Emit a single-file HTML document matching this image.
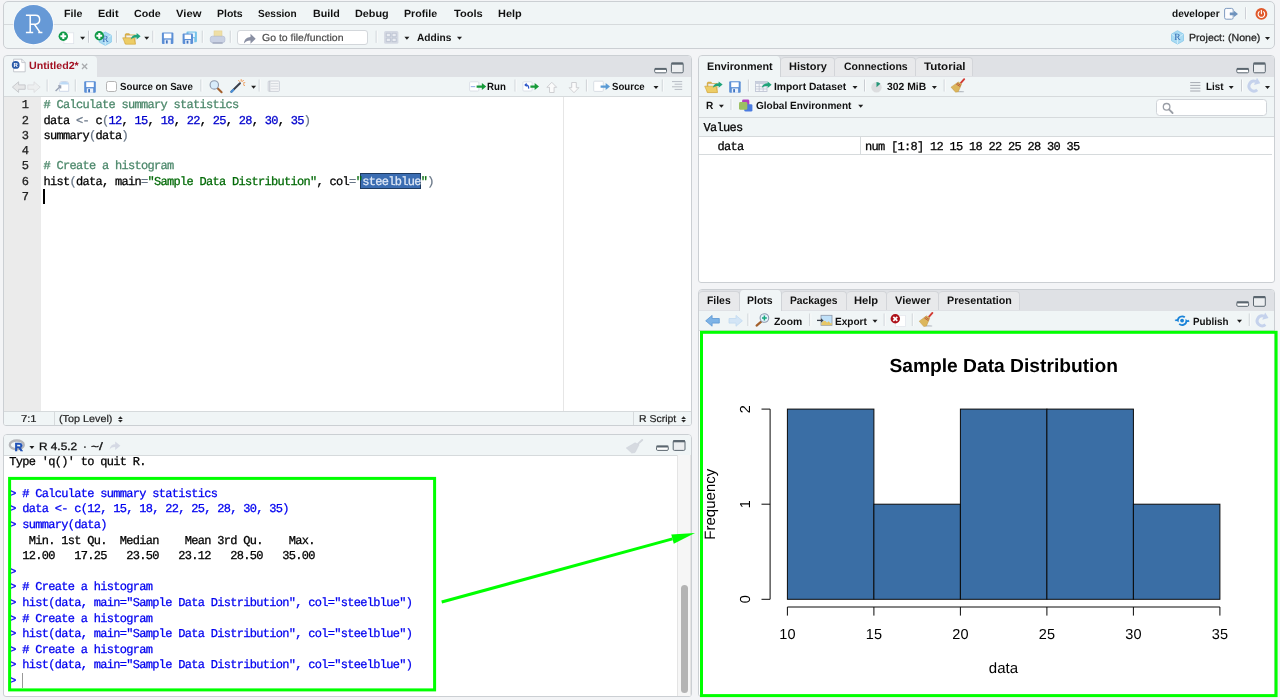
<!DOCTYPE html>
<html lang="en"><head><meta charset="utf-8"><title>RStudio</title>
<style>
html,body{margin:0;padding:0}
body{width:1280px;height:700px;overflow:hidden;background:#f3f4f6;font-family:"Liberation Sans",sans-serif;position:relative;text-rendering:geometricPrecision}
.a{position:absolute;box-sizing:border-box}
.t{position:absolute;white-space:pre;line-height:1;transform-origin:0 50%;font-size:10.2px;color:#000}
.h{font-weight:bold}
#w{position:absolute;left:0;top:0;width:1280px;height:700px;will-change:transform}
.pane{border:1px solid #cbcfd3;border-radius:4px 4px 3px 3px;background:#fff;overflow:hidden}
.tb{background:#f1f5f6}
.tabbar{background:#dfe1e5}
.m{font-family:"Liberation Mono",monospace;position:absolute;white-space:pre;line-height:1;-webkit-text-stroke:.28px}
svg{position:absolute;left:0;top:0;overflow:visible}
</style></head>
<body>
<div id="w">
<div class="a " style="left:3px;top:1px;width:1271.6px;height:48px;background:#f0f5f6;border:1px solid #cbcfd3;border-radius:5px;"></div>
<div class="a " style="left:4px;top:24px;width:1269.6px;height:1px;background:#d6dadc;"></div>
<span class="t h" style="left:63.9px;top:10px;font-size:10.4px;color:#111;transform:scaleX(1.027);">File</span>
<span class="t h" style="left:98.1px;top:10px;font-size:10.4px;color:#111;transform:scaleX(1.044);">Edit</span>
<span class="t h" style="left:133.9px;top:10px;font-size:10.4px;color:#111;transform:scaleX(1.027);">Code</span>
<span class="t h" style="left:175.9px;top:10px;font-size:10.4px;color:#111;transform:scaleX(1.080);">View</span>
<span class="t h" style="left:216.9px;top:10px;font-size:10.4px;color:#111;transform:scaleX(1.011);">Plots</span>
<span class="t h" style="left:258.1px;top:10px;font-size:10.4px;color:#111;transform:scaleX(0.970);">Session</span>
<span class="t h" style="left:312.6px;top:10px;font-size:10.4px;color:#111;transform:scaleX(1.027);">Build</span>
<span class="t h" style="left:354.9px;top:10px;font-size:10.4px;color:#111;transform:scaleX(1.042);">Debug</span>
<span class="t h" style="left:404.4px;top:10px;font-size:10.4px;color:#111;transform:scaleX(1.026);">Profile</span>
<span class="t h" style="left:453.6px;top:10px;font-size:10.4px;color:#111;transform:scaleX(1.065);">Tools</span>
<span class="t h" style="left:498.4px;top:10px;font-size:10.4px;color:#111;transform:scaleX(1.052);">Help</span>
<span class="t h" style="left:1172.1px;top:10px;font-size:10.4px;color:#111;transform:scaleX(0.969);">developer</span>
<span class="t h" style="left:416.7px;top:34px;font-size:10.4px;color:#111;transform:scaleX(0.976);">Addins</span>
<span class="t" style="left:1188.9px;top:34px;color:#222;transform:scaleX(1.042);-webkit-text-stroke:.25px #222;">Project: (None)</span>
<div class="a " style="left:237.4px;top:30.4px;width:131px;height:15.1px;background:#fff;border:1px solid #d3d7db;border-radius:3px;"></div>
<span class="t" style="left:262.3px;top:34px;color:#4a4a4a;transform:scaleX(1.028);-webkit-text-stroke:.2px #4a4a4a;">Go to file/function</span>
<div class="a pane" style="left:3px;top:55px;width:689px;height:371px;">
<div class="a" style="left:0px;top:0px;width:687px;height:20.5px;background:#dfe1e5;"></div>
<div class="a" style="left:0px;top:0px;width:93px;height:21px;background:#f0f5f6;border-radius:4px 4px 0 0;"></div>
<div class="a" style="left:0px;top:20.5px;width:687px;height:20px;background:#f0f5f6;border-bottom:1px solid #d6dadc;"></div>
<div class="a" style="left:0px;top:40.5px;width:36.7px;height:315px;background:#ebebeb;"></div>
<div class="a" style="left:559px;top:40.5px;width:1px;height:315px;background:#e6e6e6;"></div>
<div class="a" style="left:0px;top:355px;width:687px;height:15px;background:#f0f5f6;border-top:1px solid #d6dadc;"></div>
<div class="a" style="left:50px;top:356px;width:1px;height:14px;background:#d6dadc;"></div>
<div class="a" style="left:629.3px;top:356px;width:1px;height:14px;background:#d6dadc;"></div>
</div>
<span class="t h" style="left:28.6px;top:62px;font-size:10.4px;color:#a31224;transform:scaleX(1.026);">Untitled2*</span>
<div class="a " style="left:105.9px;top:80.5px;width:11px;height:11px;background:#fff;border:1px solid #b4b4b4;border-radius:2.5px;"></div>
<span class="t h" style="left:119.9px;top:83px;font-size:10.4px;color:#111;transform:scaleX(0.934);">Source on Save</span>
<span class="t h" style="left:487.2px;top:83px;font-size:10.4px;color:#111;transform:scaleX(0.930);">Run</span>
<span class="t h" style="left:612.2px;top:83px;font-size:10.4px;color:#111;transform:scaleX(0.928);">Source</span>
<span class="t" style="left:20.6px;top:415px;font-size:10px;color:#222;transform:scaleX(1.122);-webkit-text-stroke:.2px #222;">7:1</span>
<span class="t" style="left:59.1px;top:415px;font-size:10px;color:#222;transform:scaleX(1.080);-webkit-text-stroke:.2px #222;">(Top Level)</span>
<span class="t" style="left:638.8px;top:415px;font-size:10px;color:#222;transform:scaleX(1.046);-webkit-text-stroke:.2px #222;">R Script</span>
<div class="a " style="left:360.3px;top:173.1px;width:60.7px;height:15.6px;background:#3b6db2;border:1px solid #1e3a5f;"></div>
<span class="m " style="left:21.8px;top:99px;font-size:12px;letter-spacing:-0.7px;"><span style="color:#222">1</span></span>
<span class="m " style="left:43.5px;top:99px;font-size:12px;letter-spacing:-0.7px;"><span style="color:#4c886b"># Calculate summary statistics</span></span>
<span class="m " style="left:21.8px;top:115px;font-size:12px;letter-spacing:-0.7px;"><span style="color:#222">2</span></span>
<span class="m " style="left:43.5px;top:115px;font-size:12px;letter-spacing:-0.7px;"><span style="color:#000">data </span><span style="color:#687687">&lt;-</span><span style="color:#000"> c</span><span style="color:#687687">(</span><span style="color:#0000cd">12</span><span style="color:#000">, </span><span style="color:#0000cd">15</span><span style="color:#000">, </span><span style="color:#0000cd">18</span><span style="color:#000">, </span><span style="color:#0000cd">22</span><span style="color:#000">, </span><span style="color:#0000cd">25</span><span style="color:#000">, </span><span style="color:#0000cd">28</span><span style="color:#000">, </span><span style="color:#0000cd">30</span><span style="color:#000">, </span><span style="color:#0000cd">35</span><span style="color:#687687">)</span></span>
<span class="m " style="left:21.8px;top:130px;font-size:12px;letter-spacing:-0.7px;"><span style="color:#222">3</span></span>
<span class="m " style="left:43.5px;top:130px;font-size:12px;letter-spacing:-0.7px;"><span style="color:#000">summary</span><span style="color:#687687">(</span><span style="color:#000">data</span><span style="color:#687687">)</span></span>
<span class="m " style="left:21.8px;top:145px;font-size:12px;letter-spacing:-0.7px;"><span style="color:#222">4</span></span>
<span class="m " style="left:21.8px;top:160px;font-size:12px;letter-spacing:-0.7px;"><span style="color:#222">5</span></span>
<span class="m " style="left:43.5px;top:160px;font-size:12px;letter-spacing:-0.7px;"><span style="color:#4c886b"># Create a histogram</span></span>
<span class="m " style="left:21.8px;top:176px;font-size:12px;letter-spacing:-0.7px;"><span style="color:#222">6</span></span>
<span class="m " style="left:43.5px;top:176px;font-size:12px;letter-spacing:-0.7px;"><span style="color:#000">hist</span><span style="color:#687687">(</span><span style="color:#000">data, main</span><span style="color:#687687">=</span><span style="color:#036a07">"Sample Data Distribution"</span><span style="color:#000">, col</span><span style="color:#687687">=</span><span style="color:#036a07">"</span><span style="color:#dfe8f6">steelblue</span><span style="color:#036a07">"</span><span style="color:#687687">)</span></span>
<span class="m " style="left:21.8px;top:191px;font-size:12px;letter-spacing:-0.7px;"><span style="color:#222">7</span></span>
<div class="a " style="left:43.3px;top:189.2px;width:1.6px;height:14.8px;background:#000;"></div>
<div class="a pane" style="left:3px;top:433.5px;width:689px;height:263px;">
<div class="a" style="left:0px;top:0px;width:687px;height:21px;background:#f0f5f6;border-bottom:1px solid #d6dadc;"></div>
<div class="a" style="left:673.4px;top:20.5px;width:13.6px;height:241px;background:#f6f6f6;border-left:1px solid #e4e4e4;border-right:1px solid #e4e4e4;"></div>
<div class="a" style="left:677px;top:150.5px;width:7px;height:107.5px;background:#b4b4b4;border-radius:3.5px;"></div>
</div>
<span class="t" style="left:39.4px;top:442px;font-size:10.7px;color:#111;transform:scaleX(1.104);-webkit-text-stroke:.3px #111;">R 4.5.2</span>
<span class="t" style="left:83px;top:442px;font-size:10.7px;color:#111;transform:scaleX(1.060);-webkit-text-stroke:.3px #111;">·</span>
<span class="t" style="left:91.3px;top:442px;font-size:10.7px;color:#111;transform:scaleX(1.280);-webkit-text-stroke:.3px #111;">~/</span>
<span class="m " style="left:9.3px;top:456px;font-size:12px;letter-spacing:-0.7px;"><span style="color:#000">Type 'q()' to quit R.</span></span>
<span class="m " style="left:9.3px;top:488px;font-size:12px;letter-spacing:-0.7px;"><span style="color:#0000f0">&gt; # Calculate summary statistics</span></span>
<span class="m " style="left:9.3px;top:503px;font-size:12px;letter-spacing:-0.7px;"><span style="color:#0000f0">&gt; data &lt;- c(12, 15, 18, 22, 25, 28, 30, 35)</span></span>
<span class="m " style="left:9.3px;top:519px;font-size:12px;letter-spacing:-0.7px;"><span style="color:#0000f0">&gt; summary(data)</span></span>
<span class="m " style="left:9.3px;top:535px;font-size:12px;letter-spacing:-0.7px;"><span style="color:#000">   Min. 1st Qu.  Median    Mean 3rd Qu.    Max. </span></span>
<span class="m " style="left:9.3px;top:550px;font-size:12px;letter-spacing:-0.7px;"><span style="color:#000">  12.00   17.25   23.50   23.12   28.50   35.00 </span></span>
<span class="m " style="left:9.3px;top:566px;font-size:12px;letter-spacing:-0.7px;"><span style="color:#0000f0">&gt; </span></span>
<span class="m " style="left:9.3px;top:581px;font-size:12px;letter-spacing:-0.7px;"><span style="color:#0000f0">&gt; # Create a histogram</span></span>
<span class="m " style="left:9.3px;top:597px;font-size:12px;letter-spacing:-0.7px;"><span style="color:#0000f0">&gt; hist(data, main="Sample Data Distribution", col="steelblue")</span></span>
<span class="m " style="left:9.3px;top:613px;font-size:12px;letter-spacing:-0.7px;"><span style="color:#0000f0">&gt; # Create a histogram</span></span>
<span class="m " style="left:9.3px;top:628px;font-size:12px;letter-spacing:-0.7px;"><span style="color:#0000f0">&gt; hist(data, main="Sample Data Distribution", col="steelblue")</span></span>
<span class="m " style="left:9.3px;top:644px;font-size:12px;letter-spacing:-0.7px;"><span style="color:#0000f0">&gt; # Create a histogram</span></span>
<span class="m " style="left:9.3px;top:659px;font-size:12px;letter-spacing:-0.7px;"><span style="color:#0000f0">&gt; hist(data, main="Sample Data Distribution", col="steelblue")</span></span>
<span class="m " style="left:9.3px;top:675px;font-size:12px;letter-spacing:-0.7px;"><span style="color:#0000f0">&gt; </span></span>
<div class="a " style="left:21.6px;top:673px;width:1px;height:15px;background:#999;"></div>
<div class="a pane" style="left:698px;top:55px;width:576.6px;height:228px;">
<div class="a" style="left:0px;top:0px;width:574.6px;height:20.5px;background:#dfe1e5;"></div>
<div class="a" style="left:0px;top:20.5px;width:574.6px;height:20px;background:#f0f5f6;border-bottom:1px solid #d6dadc;"></div>
<div class="a" style="left:0px;top:40.5px;width:574.6px;height:21px;background:#f0f5f6;border-bottom:1px solid #d6dadc;"></div>
<div class="a" style="left:0px;top:61.5px;width:574.6px;height:19.5px;background:#f0f5f6;border-bottom:1px solid #d6dadc;"></div>
<div class="a" style="left:0px;top:98px;width:572.6px;height:1px;background:#d6dadc;"></div>
<div class="a" style="left:161.3px;top:81px;width:1px;height:17.5px;background:#d6dadc;"></div>
</div>
<div class="a " style="left:780.6px;top:56.9px;width:54.8px;height:19.4px;background:#e8e9eb;border-radius:4px 4px 0 0;border:1px solid #d3d5d9;border-bottom:none;border-left:none;"></div>
<span class="t h" style="left:789px;top:62px;font-size:10.9px;color:#111;transform:scaleX(1.007);">History</span>
<div class="a " style="left:835.4px;top:56.9px;width:80.4px;height:19.4px;background:#e8e9eb;border-radius:4px 4px 0 0;border:1px solid #d3d5d9;border-bottom:none;border-left:none;"></div>
<span class="t h" style="left:843.8px;top:62px;font-size:10.9px;color:#111;transform:scaleX(0.965);">Connections</span>
<div class="a " style="left:915.8px;top:56.9px;width:57.5px;height:19.4px;background:#e8e9eb;border-radius:4px 4px 0 0;border:1px solid #d3d5d9;border-bottom:none;border-left:none;"></div>
<span class="t h" style="left:923.8px;top:62px;font-size:10.9px;color:#111;transform:scaleX(1.062);">Tutorial</span>
<div class="a " style="left:699px;top:56.3px;width:82.2px;height:21.2px;background:#f0f5f6;border-radius:4px 4px 0 0;border-right:1px solid #d0d3d7;"></div>
<span class="t h" style="left:707px;top:62px;font-size:10.9px;color:#111;transform:scaleX(0.986);">Environment</span>
<span class="t h" style="left:774px;top:83px;font-size:10.4px;color:#111;transform:scaleX(0.992);">Import Dataset</span>
<span class="t h" style="left:886.6px;top:83px;font-size:10.4px;color:#111;transform:scaleX(0.997);">302 MiB</span>
<span class="t h" style="left:1205.6px;top:83px;font-size:10.4px;color:#111;transform:scaleX(0.947);">List</span>
<span class="t h" style="left:705.9px;top:102px;font-size:10.4px;color:#111;transform:scaleX(0.972);">R</span>
<span class="t h" style="left:756.3px;top:102px;font-size:10.4px;color:#111;transform:scaleX(0.966);">Global Environment</span>
<div class="a " style="left:1156.2px;top:99.3px;width:110.6px;height:16.5px;background:#fff;border:1px solid #d0d4d9;border-radius:3.5px;"></div>
<span class="m " style="left:703.6px;top:122px;font-size:12px;letter-spacing:-0.7px;"><span style="color:#000">Values</span></span>
<span class="m " style="left:717.6px;top:141px;font-size:12px;letter-spacing:-0.7px;"><span style="color:#000">data</span></span>
<span class="m " style="left:865px;top:141px;font-size:12px;letter-spacing:-0.7px;"><span style="color:#000">num [1:8] 12 15 18 22 25 28 30 35</span></span>
<div class="a pane" style="left:698px;top:289px;width:576.6px;height:407.5px;">
<div class="a" style="left:0px;top:0px;width:574.6px;height:21px;background:#dfe1e5;"></div>
<div class="a" style="left:0px;top:20.5px;width:574.6px;height:20.5px;background:#f0f5f6;border-bottom:1px solid #d6dadc;"></div>
</div>
<div class="a " style="left:699px;top:290.9px;width:40.7px;height:19.4px;background:#e8e9eb;border-radius:4px 4px 0 0;border:1px solid #d3d5d9;border-bottom:none;border-left:none;"></div>
<span class="t h" style="left:706.9px;top:296px;font-size:10.9px;color:#111;transform:scaleX(0.954);">Files</span>
<div class="a " style="left:781.5px;top:290.9px;width:65.4px;height:19.4px;background:#e8e9eb;border-radius:4px 4px 0 0;border:1px solid #d3d5d9;border-bottom:none;border-left:none;"></div>
<span class="t h" style="left:790.1px;top:296px;font-size:10.9px;color:#111;transform:scaleX(0.944);">Packages</span>
<div class="a " style="left:846.9px;top:290.9px;width:40px;height:19.4px;background:#e8e9eb;border-radius:4px 4px 0 0;border:1px solid #d3d5d9;border-bottom:none;border-left:none;"></div>
<span class="t h" style="left:854.4px;top:296px;font-size:10.9px;color:#111;transform:scaleX(1.025);">Help</span>
<div class="a " style="left:886.9px;top:290.9px;width:52px;height:19.4px;background:#e8e9eb;border-radius:4px 4px 0 0;border:1px solid #d3d5d9;border-bottom:none;border-left:none;"></div>
<span class="t h" style="left:894.9px;top:296px;font-size:10.9px;color:#111;transform:scaleX(1.022);">Viewer</span>
<div class="a " style="left:938.9px;top:290.9px;width:81.3px;height:19.4px;background:#e8e9eb;border-radius:4px 4px 0 0;border:1px solid #d3d5d9;border-bottom:none;border-left:none;"></div>
<span class="t h" style="left:947.4px;top:296px;font-size:10.9px;color:#111;transform:scaleX(0.983);">Presentation</span>
<div class="a " style="left:739.1px;top:290.3px;width:43px;height:21.2px;background:#f0f5f6;border-radius:4px 4px 0 0;border-right:1px solid #d0d3d7;border-left:1px solid #d0d3d7;"></div>
<span class="t h" style="left:747.4px;top:296px;font-size:10.9px;color:#111;transform:scaleX(0.964);">Plots</span>
<span class="t h" style="left:773.6px;top:318px;font-size:10.4px;color:#111;transform:scaleX(0.996);">Zoom</span>
<span class="t h" style="left:834.9px;top:318px;font-size:10.4px;color:#111;transform:scaleX(0.969);">Export</span>
<span class="t h" style="left:1193.1px;top:318px;font-size:10.4px;color:#111;transform:scaleX(0.945);">Publish</span>
<svg width="1280" height="700" viewBox="0 0 1280 700" role="img" aria-label="Histogram: Sample Data Distribution">
<circle cx="33.45" cy="24.65" r="20.3" fill="#fbfcfd"/><circle cx="33.45" cy="24.65" r="19.6" fill="#6699d6"/><path d="M25.9 15.2H35.6C41 15.2 41 24.2 35.6 24.2H30.2M30.2 15.2V32.4M25.9 32.4H33.2M34.4 24.3L40 32.4M38.2 32.4H42.4" fill="none" stroke="#fff" stroke-width="1.5"/>
<rect x="63.9" y="32.8" width="9.8" height="10.8" fill="#fff" stroke="#dfe3ea" stroke-width=".8"/>
<circle cx="63.3" cy="36.2" r="4.7" fill="#0f9a47"/><path d="M60.39 36.2H66.21M63.3 33.29V39.11" stroke="#fff" stroke-width="2.1" fill="none"/>
<path d="M80.1 36.8h5l-2.5 3z" fill="#1e1e1e"/>
<path d="M88.5 30.7V42.8" stroke="#c9cdd2" stroke-width="1" fill="none"/><path d="M89.5 30.7V42.8" stroke="#fbfcfd" stroke-width="1" fill="none"/>
<path d="M105.3 32L99.21 35.35L99.21 42.05L105.3 45.4L111.39 42.05L111.39 35.35Z" fill="#a9dbf3" stroke="#7cc3e8" stroke-width=".7"/><path d="M99.21 35.35L105.3 39.2L111.39 35.35M105.3 39.2V45.4" stroke="#d9f0fb" stroke-width=".8" fill="none"/><text x="105.3" y="41.7" font-family="Liberation Serif" font-size="9.5" fill="#2f66b0" text-anchor="middle">R</text>
<circle cx="99.3" cy="35.8" r="4.7" fill="#0f9a47"/><path d="M96.39 35.8H102.21M99.3 32.89V38.71" stroke="#fff" stroke-width="2.1" fill="none"/>
<path d="M116.6 30.7V42.8" stroke="#c9cdd2" stroke-width="1" fill="none"/><path d="M117.6 30.7V42.8" stroke="#fbfcfd" stroke-width="1" fill="none"/>
<path d="M124.8 44V34.6l1.1-1.3h3.2l1.1 1.3h5.2V44z" fill="#d6ad47"/><path d="M126.2 35.5h8.2v5h-8.2z" fill="#f3f3f3" stroke="#cfcfcf" stroke-width=".4"/><path d="M122.7 37.8h11.4l1.4 6.4h-10z" fill="#edcd66" stroke="#cfa136" stroke-width=".6"/><path transform="translate(130.8 33.3) scale(1.08)" d="M0 5.7c0.5-3 2.9-4.3 5.4-4.3v-1.7l3.7 3l-3.7 3v-1.7c-2.2-0.1-3.9 0.3-5.4 1.7z" fill="#1fa37a"/>
<path d="M144.2 36.8h5l-2.5 3z" fill="#1e1e1e"/>
<path d="M152.9 30.7V42.8" stroke="#c9cdd2" stroke-width="1" fill="none"/><path d="M153.9 30.7V42.8" stroke="#fbfcfd" stroke-width="1" fill="none"/>
<rect x="161.9" y="32.5" width="11.5" height="11.5" rx="1" fill="#5b8fd6"/><rect x="163.9" y="33.5" width="7.5" height="4.83" fill="#fff"/><rect x="164.5" y="39.63" width="6.3" height="4.37" fill="#eaf1fb"/><rect x="165.9" y="40.32" width="1.8" height="3.22" fill="#3f73c0"/>
<rect x="186.5" y="31.6" width="10.4" height="10.6" rx="1" fill="#74c2ea"/><rect x="188.5" y="32.6" width="6.4" height="4.45" fill="#e8f6fd"/><rect x="189.1" y="38.17" width="5.2" height="4.03" fill="#eaf1fb"/><rect x="190.5" y="38.81" width="1.8" height="2.97" fill="#3f73c0"/>
<rect x="182.6" y="33.6" width="10.4" height="10.4" rx="1" fill="#5b8fd6"/><rect x="184.6" y="34.6" width="6.4" height="4.37" fill="#fff"/><rect x="185.2" y="40.05" width="5.2" height="3.95" fill="#eaf1fb"/><rect x="186.6" y="40.67" width="1.8" height="2.91" fill="#3f73c0"/>
<path d="M202.3 30.7V42.8" stroke="#c9cdd2" stroke-width="1" fill="none"/><path d="M203.3 30.7V42.8" stroke="#fbfcfd" stroke-width="1" fill="none"/>
<rect x="214" y="30.9" width="8" height="6.6" fill="#efdfa6" stroke="#e2cf8c" stroke-width=".5"/><rect x="210.3" y="36.2" width="14.6" height="6.4" rx="2.2" fill="#c9d1e3" stroke="#aab4cc" stroke-width=".6"/><rect x="212.5" y="42.4" width="10.2" height="1.3" fill="#9aa3ba"/>
<path d="M230.3 30.7V42.8" stroke="#c9cdd2" stroke-width="1" fill="none"/><path d="M231.3 30.7V42.8" stroke="#fbfcfd" stroke-width="1" fill="none"/>
<path d="M243.9 43.5c0.5-4.2 3-6.3 6.6-6.4v-3.3l5.2 5l-5.2 5v-3.3c-2.8-0.1-4.8 0.8-6.6 3z" fill="#8a90a3"/>
<path d="M376.2 30.7V42.8" stroke="#c9cdd2" stroke-width="1" fill="none"/><path d="M377.2 30.7V42.8" stroke="#fbfcfd" stroke-width="1" fill="none"/>
<rect x="384.1" y="30.9" width="14.3" height="12.9" rx="1.6" fill="#d4d9e3"/><path d="M386.3 33.3h4.1v3.4h-4.1zM392.1 33.3h4.1v3.4h-4.1zM386.3 38.2h4.1v3.4h-4.1zM392.1 38.2h4.1v3.4h-4.1z" fill="#e9ecf2" stroke="#b3bccb" stroke-width=".7"/>
<path d="M404.4 36.8h5l-2.5 3z" fill="#1e1e1e"/>
<path d="M457 36.8h5l-2.5 3z" fill="#1e1e1e"/>
<rect x="1224.6" y="8.4" width="8.6" height="10.8" rx="1.6" fill="#fdfdfe" stroke="#7f9bc0" stroke-width="1"/><path d="M1229.8 12.6h4.23v-1.9l3.97 3.2l-3.97 3.2v-1.9h-4.23z" fill="#6f93bd"/>
<path d="M1245.6 7.2V19.3" stroke="#c9cdd2" stroke-width="1" fill="none"/><path d="M1246.6 7.2V19.3" stroke="#fbfcfd" stroke-width="1" fill="none"/>
<circle cx="1261.4" cy="13.9" r="5.9" fill="#e0592a"/><path d="M1259.2 11.6a3.3 3.3 0 1 0 4.4 0" fill="none" stroke="#fff" stroke-width="1.1" stroke-linecap="round"/><path d="M1261.4 10.2v3.6" stroke="#fff" stroke-width="1.1" stroke-linecap="round"/>
<path d="M1177.5 30.7L1171.5 34.05L1171.5 40.75L1177.5 44.1L1183.5 40.75L1183.5 34.05Z" fill="#a9dbf3" stroke="#7cc3e8" stroke-width=".7"/><path d="M1171.5 34.05L1177.5 37.9L1183.5 34.05M1177.5 37.9V44.1" stroke="#d9f0fb" stroke-width=".8" fill="none"/><text x="1177.5" y="40.4" font-family="Liberation Serif" font-size="9.5" fill="#2f66b0" text-anchor="middle">R</text>
<path d="M1265 36.9h5l-2.5 3z" fill="#1e1e1e"/>
<path d="M13.6 59.2h8.2l3.4 3.4v9.2h-11.6z" fill="#fff" stroke="#b9bdc4" stroke-width=".8"/><path d="M21.8 59.2v3.4h3.4" fill="none" stroke="#b9bdc4" stroke-width=".8"/><circle cx="15.7" cy="64.9" r="3.9" fill="#2a5aa8"/><text x="15.7" y="67.1" font-family="Liberation Sans" font-weight="bold" font-size="6" fill="#fff" text-anchor="middle">R</text>
<path d="M82 63.8l5.2 5.2M87.2 63.8l-5.2 5.2" stroke="#a9abae" stroke-width="1.3" fill="none"/>
<rect x="654.7" y="68.6" width="11.8" height="4.2" rx="1.2" fill="#fff" stroke="#5b666f" stroke-width="1"/><path d="M654.7 68.9h11.8" stroke="#5b666f" stroke-width="2"/><rect x="671.4" y="63.1" width="11.8" height="9.7" rx="1.2" fill="#eceef0" stroke="#5b666f" stroke-width="1"/><path d="M671.4 63.6h11.8" stroke="#5b666f" stroke-width="2.2"/>
<path d="M12.4 87.1l6.2-5.3v3.1h6.6v4.4h-6.6v3.1z" fill="#e6e7e8" stroke="#c3c5c8" stroke-width=".9"/>
<path d="M40.2 87.1l-6.2-5.3v3.1h-6.2v4.4h6.2v3.1z" fill="#edeff0" stroke="#dcdee0" stroke-width=".9"/>
<path d="M47.2 79.5V91.5" stroke="#c9cdd2" stroke-width="1" fill="none"/><path d="M48.2 79.5V91.5" stroke="#fbfcfd" stroke-width="1" fill="none"/>
<path d="M59.5 91.3v-7.2q0-2.6 2.6-2.6h4q2.6 0 2.6 2.6v7.2z" fill="#fff" stroke="#c5cfe3" stroke-width=".8"/><path d="M59.9 84.6q0-2.7 2.4-2.7h3.8q2.4 0 2.4 2.7z" fill="#bcd9f5"/><path d="M55.6 91l4.6-4.6M58 85.9h2.6v2.6" stroke="#9aa3b5" stroke-width="1.4" fill="none"/>
<path d="M75.3 79.5V91.5" stroke="#c9cdd2" stroke-width="1" fill="none"/><path d="M76.3 79.5V91.5" stroke="#fbfcfd" stroke-width="1" fill="none"/>
<rect x="84.2" y="81.2" width="11.6" height="11.6" rx="1" fill="#5b8fd6"/><rect x="86.2" y="82.2" width="7.6" height="4.87" fill="#fff"/><rect x="86.8" y="88.39" width="6.4" height="4.41" fill="#eaf1fb"/><rect x="88.2" y="89.09" width="1.8" height="3.25" fill="#3f73c0"/>
<path d="M201 79.5V91.5" stroke="#c9cdd2" stroke-width="1" fill="none"/><path d="M202 79.5V91.5" stroke="#fbfcfd" stroke-width="1" fill="none"/>
<path d="M217.6 88.2l4 4" stroke="#a3602c" stroke-width="2" stroke-linecap="round"/><circle cx="214.3" cy="84.9" r="4.2" fill="#d8ecfb" stroke="#8c98ad" stroke-width="1.1"/>
<path d="M231.4 91.8l8.6-8.6" stroke="#3a3f4a" stroke-width="2" stroke-linecap="round"/><path d="M231.4 91.8l1.8-1.8" stroke="#4a90d9" stroke-width="2.2" stroke-linecap="round"/><path d="M241.2 79.2v2.4M243.6 80l-1.3 1.7M245.2 82.6l-2.2 0.6M245 85.6l-1.9-1M238.4 80.2l1.2 1.5" stroke="#f08a3c" stroke-width=".9" fill="none"/>
<path d="M251.1 85.7h5l-2.5 3z" fill="#1e1e1e"/>
<path d="M259.2 79.5V91.5" stroke="#c9cdd2" stroke-width="1" fill="none"/><path d="M260.2 79.5V91.5" stroke="#fbfcfd" stroke-width="1" fill="none"/>
<rect x="268.2" y="81" width="11.2" height="10.4" rx="1" fill="#f5f6f8" stroke="#c4c8d0" stroke-width=".8"/><path d="M270.8 83.6h7.6M270.8 86.2h7.6M270.8 88.8h7.6" stroke="#cdd0d7" stroke-width=".8"/><path d="M269.8 81v10.4" stroke="#b9bdc6" stroke-width=".9"/>
<rect x="469.6" y="81.8" width="9.2" height="9.2" rx="1" fill="#fff" stroke="#d4d9e2" stroke-width=".8"/><path d="M470.8 86.6h4.4" stroke="#9db7e8" stroke-width="1.2"/><path d="M476.6 85.4h5.26v-2.3l4.34 3.5l-4.34 3.5v-2.3h-5.26z" fill="#169a38"/>
<path d="M515.1 79.5V91.5" stroke="#c9cdd2" stroke-width="1" fill="none"/><path d="M516.1 79.5V91.5" stroke="#fbfcfd" stroke-width="1" fill="none"/>
<rect x="522.9" y="81.8" width="9.2" height="9.2" rx="1" fill="#fff" stroke="#d4d9e2" stroke-width=".8"/><path d="M528.6 88.6c0.4-2.6-1-3.8-3.2-3.6" fill="none" stroke="#2a55c8" stroke-width="1.3"/><path d="M524.2 85l2.4-2.2v4.2z" fill="#2a55c8"/><path d="M530.4 85.4h4.26v-2.3l4.34 3.5l-4.34 3.5v-2.3h-4.26z" fill="#169a38"/>
<path d="M551.8 82.3l4.9 5h-2.6v5.2h-4.6v-5.2h-2.6z" fill="#fbfbfb" stroke="#c9cbce" stroke-width=".9"/>
<path d="M574 92.7l4.9-5h-2.6v-5.2h-4.6v5.2h-2.6z" fill="#fbfbfb" stroke="#c9cbce" stroke-width=".9"/>
<path d="M586.4 79.5V91.5" stroke="#c9cdd2" stroke-width="1" fill="none"/><path d="M587.4 79.5V91.5" stroke="#fbfcfd" stroke-width="1" fill="none"/>
<rect x="593.7" y="81.2" width="9.6" height="10.2" rx="1" fill="#fff" stroke="#d0d5de" stroke-width=".8"/><path d="M600.6 85.4h5.06v-2.3l4.34 3.5l-4.34 3.5v-2.3h-5.06z" fill="#5b9bd5"/>
<path d="M653.5 86.1h5l-2.5 3z" fill="#1e1e1e"/>
<path d="M662.3 79.5V91.5" stroke="#c9cdd2" stroke-width="1" fill="none"/><path d="M663.3 79.5V91.5" stroke="#fbfcfd" stroke-width="1" fill="none"/>
<path d="M672 81.6h10.2M674.6 84.2h7.6M672 86.8h10.2M674.6 89.4h7.6" stroke="#b7bcc4" stroke-width="1" fill="none"/>
<path d="M118 418.9l2.4-2.6l2.4 2.6zM118 420l2.4 2.6l2.4-2.6z" fill="#2a2a2a"/>
<path d="M681.2 418.9l2.4-2.6l2.4 2.6zM681.2 420l2.4 2.6l2.4-2.6z" fill="#2a2a2a"/>
<ellipse cx="16.8" cy="444.9" rx="7" ry="4.4" fill="none" stroke="#b4b5b9" stroke-width="2.3"/><text x="14.6" y="451.4" font-family="Liberation Sans" font-weight="bold" font-size="11.5" fill="#1d4fb5" stroke="#1d4fb5" stroke-width=".5">R</text>
<path d="M29.4 446h5l-2.5 3z" fill="#1e1e1e"/>
<path d="M109.6 449.4c0.4-3.4 2.6-5 5.6-5.1v-2.8l5.2 4.2l-5.2 4.2v-2.8c-2.4-0.1-4.1 0.6-5.6 2.3z" fill="#d5d9e4"/>
<path d="M638.22 443.62L642.23 439.98" stroke="#d3d7dd" stroke-width="1.9" stroke-linecap="round"/><path d="M635.06 442.76L639.07 444.77L635.06 452.53L631.79 453.11L626.2 447.93Z" fill="#d6dae0" stroke="#c5cad3" stroke-width=".4"/>
<rect x="656.5" y="446.2" width="11.8" height="4.2" rx="1.2" fill="#fff" stroke="#5b666f" stroke-width="1"/><path d="M656.5 446.5h11.8" stroke="#5b666f" stroke-width="2"/><rect x="673.2" y="440.7" width="11.8" height="9.7" rx="1.2" fill="#eceef0" stroke="#5b666f" stroke-width="1"/><path d="M673.2 441.2h11.8" stroke="#5b666f" stroke-width="2.2"/>
<rect x="1236.8" y="68.6" width="11.8" height="4.2" rx="1.2" fill="#fff" stroke="#5b666f" stroke-width="1"/><path d="M1236.8 68.9h11.8" stroke="#5b666f" stroke-width="2"/><rect x="1253.5" y="63.1" width="11.8" height="9.7" rx="1.2" fill="#eceef0" stroke="#5b666f" stroke-width="1"/><path d="M1253.5 63.6h11.8" stroke="#5b666f" stroke-width="2.2"/>
<path d="M706.8 92.4V83l1.1-1.3h3.2l1.1 1.3h5.2V92.4z" fill="#d6ad47"/><path d="M708.2 83.9h8.2v5h-8.2z" fill="#f3f3f3" stroke="#cfcfcf" stroke-width=".4"/><path d="M704.7 86.2h11.4l1.4 6.4h-10z" fill="#edcd66" stroke="#cfa136" stroke-width=".6"/><path transform="translate(712.8 81.7) scale(1.08)" d="M0 5.7c0.5-3 2.9-4.3 5.4-4.3v-1.7l3.7 3l-3.7 3v-1.7c-2.2-0.1-3.9 0.3-5.4 1.7z" fill="#1fa37a"/>
<rect x="729.2" y="81.3" width="11.5" height="11.5" rx="1" fill="#5b8fd6"/><rect x="731.2" y="82.3" width="7.5" height="4.83" fill="#fff"/><rect x="731.8" y="88.43" width="6.3" height="4.37" fill="#eaf1fb"/><rect x="733.2" y="89.12" width="1.8" height="3.22" fill="#3f73c0"/>
<path d="M748.4 79.5V91.5" stroke="#c9cdd2" stroke-width="1" fill="none"/><path d="M749.4 79.5V91.5" stroke="#fbfcfd" stroke-width="1" fill="none"/>
<rect x="755.4" y="81.4" width="11.6" height="10" fill="#f4f6fa" stroke="#b9c0d0" stroke-width=".8"/><rect x="755.4" y="81.4" width="11.6" height="2.6" fill="#c9d0de"/><path d="M755.4 86.6h11.6M755.4 89h11.6M759.2 84v7.4M763.2 84v7.4" stroke="#b9c0d0" stroke-width=".7" fill="none"/><path transform="translate(761.8 81.8) scale(1.08)" d="M0 5.7c0.5-3 2.9-4.3 5.4-4.3v-1.7l3.7 3l-3.7 3v-1.7c-2.2-0.1-3.9 0.3-5.4 1.7z" fill="#1fa37a"/>
<path d="M852.5 86.1h5l-2.5 3z" fill="#1e1e1e"/>
<path d="M864.5 79.5V91.5" stroke="#c9cdd2" stroke-width="1" fill="none"/><path d="M865.5 79.5V91.5" stroke="#fbfcfd" stroke-width="1" fill="none"/>
<circle cx="876.5" cy="87.2" r="5.2" fill="#dcdddf"/><path d="M876.5 87.2v-5.2a5.2 5.2 0 0 1 3.9 1.8z" fill="#26987a"/>
<path d="M931.9 86.1h5l-2.5 3z" fill="#1e1e1e"/>
<path d="M944.2 79.5V91.5" stroke="#c9cdd2" stroke-width="1" fill="none"/><path d="M945.2 79.5V91.5" stroke="#fbfcfd" stroke-width="1" fill="none"/>
<ellipse cx="960.6" cy="91.64" rx="3.6" ry=".7" fill="#6b7280" opacity=".45"/><path d="M960.9 82.82L964.2 79.18" stroke="#d23b34" stroke-width="1.9" stroke-linecap="round"/><path d="M958.3 81.96L961.6 83.97L958.3 91.73L955.6 92.31L951 87.13Z" fill="#dcb65c" stroke="#b98a2f" stroke-width=".4"/><path d="M957.2 83.11L960.9 85.41M956.2 84.07L960.3 86.65" stroke="#b5533a" stroke-width=".9"/>
<path d="M1190.2 82.6h10.2M1190.2 85.4h10.2M1190.2 88.2h10.2M1190.2 91h10.2" stroke="#9da2a9" stroke-width=".9" fill="none"/>
<path d="M1228.7 86.1h5l-2.5 3z" fill="#1e1e1e"/>
<path d="M1241.5 79.5V91.5" stroke="#c9cdd2" stroke-width="1" fill="none"/><path d="M1242.5 79.5V91.5" stroke="#fbfcfd" stroke-width="1" fill="none"/>
<path d="M1257.21 89.93A5 5 0 1 1 1255.87 81.46" fill="none" stroke="#c5d2ec" stroke-width="3"/><path d="M1256.96 77.7L1254.04 84.93L1260.32 83.26Z" fill="#c5d2ec"/>
<path d="M1265 86.1h5l-2.5 3z" fill="#1e1e1e"/>
<path d="M718.9 104.8h5l-2.5 3z" fill="#1e1e1e"/>
<path d="M731.1 99.2V110" stroke="#c9cdd2" stroke-width="1" fill="none"/><path d="M732.1 99.2V110" stroke="#fbfcfd" stroke-width="1" fill="none"/>
<rect x="742.1" y="99.5" width="7.2" height="7.2" rx="1.4" fill="#b23fbe"/><rect x="744.3" y="104.2" width="8.1" height="7.4" rx="1.4" fill="#4a7be0"/><rect x="739" y="102" width="8.3" height="7.8" rx="1.4" fill="#9cbf62"/>
<path d="M858.2 104.8h5l-2.5 3z" fill="#1e1e1e"/>
<circle cx="1166.6" cy="106.8" r="3.3" fill="none" stroke="#9a9ea6" stroke-width="1.3"/><path d="M1169 109.4l3.6 3.6" stroke="#9a9ea6" stroke-width="1.8" stroke-linecap="round"/>
<rect x="1236.8" y="302.1" width="11.8" height="4.2" rx="1.2" fill="#fff" stroke="#5b666f" stroke-width="1"/><path d="M1236.8 302.4h11.8" stroke="#5b666f" stroke-width="2"/><rect x="1253.5" y="296.6" width="11.8" height="9.7" rx="1.2" fill="#eceef0" stroke="#5b666f" stroke-width="1"/><path d="M1253.5 297.1h11.8" stroke="#5b666f" stroke-width="2.2"/>
<path d="M705.7 320.8l6.4-5.4v3.1h7.2v4.6h-7.2v3.1z" fill="#7db3e6" stroke="#5a97d3" stroke-width=".8"/>
<path d="M742.4 320.8l-6.4-5.4v3.1h-7v4.6h7v3.1z" fill="#d3e5f6" stroke="#c0d9f0" stroke-width=".8"/>
<path d="M748 313.5V326" stroke="#c9cdd2" stroke-width="1" fill="none"/><path d="M749 313.5V326" stroke="#fbfcfd" stroke-width="1" fill="none"/>
<path d="M761.2 321.6l-4.6 4" stroke="#a3602c" stroke-width="2.2" stroke-linecap="round"/><circle cx="764.4" cy="318" r="4.3" fill="#e3f1fb" stroke="#8c98ad" stroke-width="1.1"/><path d="M762 318h4.8M764.4 315.6v4.8" stroke="#17a67c" stroke-width="1.5"/>
<path d="M809.8 313.5V326" stroke="#c9cdd2" stroke-width="1" fill="none"/><path d="M810.8 313.5V326" stroke="#fbfcfd" stroke-width="1" fill="none"/>
<rect x="821" y="315.3" width="11" height="10" fill="#bfe0f8" stroke="#8b96a8" stroke-width=".8"/><path d="M821.4 325l3.4-4.2l2.2 2l1.8-1.6l2.8 3.8z" fill="#e6c25c"/><path d="M821.4 322.4q3-2.6 5.4 0t5 0v2.8h-10.4z" fill="#e8c866" opacity=".9"/><path d="M817 320.4h4.6" stroke="#3a3f4a" stroke-width="1.3"/><path d="M821 318.2l2.6 2.2l-2.6 2.2z" fill="#3a3f4a"/>
<path d="M872.5 319.8h5l-2.5 3z" fill="#1e1e1e"/>
<path d="M884.2 313.5V326" stroke="#c9cdd2" stroke-width="1" fill="none"/><path d="M885.2 313.5V326" stroke="#fbfcfd" stroke-width="1" fill="none"/>
<rect x="895.4" y="315.4" width="10" height="11" fill="#fff" stroke="#e1e5ec" stroke-width=".7"/><circle cx="895.3" cy="318.8" r="4.7" fill="#ae1119"/><path d="M893.3 316.8l4 4M897.3 316.8l-4 4" stroke="#fff" stroke-width="1.7"/>
<path d="M912.3 313.5V326" stroke="#c9cdd2" stroke-width="1" fill="none"/><path d="M913.3 313.5V326" stroke="#fbfcfd" stroke-width="1" fill="none"/>
<ellipse cx="928.8" cy="325.9" rx="3.6" ry=".7" fill="#6b7280" opacity=".45"/><path d="M929.1 316.7L932.4 312.9" stroke="#d23b34" stroke-width="1.9" stroke-linecap="round"/><path d="M926.5 315.8L929.8 317.9L926.5 326L923.8 326.6L919.2 321.2Z" fill="#dcb65c" stroke="#b98a2f" stroke-width=".4"/><path d="M925.4 317L929.1 319.4M924.4 318L928.5 320.7" stroke="#b5533a" stroke-width=".9"/>
<path d="M1175.2 320.7C1176.2 319.8 1177 319.9 1177.8 320.5A4.3 4.3 0 0 1 1184.8 317.3M1189 320.5C1188 321.4 1187.2 321.3 1186.4 320.7A4.3 4.3 0 0 1 1179.2 323.9" fill="none" stroke="#1a83d8" stroke-width="1.8"/><circle cx="1182.1" cy="320.6" r="1.9" fill="#1a83d8"/>
<path d="M1237 319.8h5l-2.5 3z" fill="#1e1e1e"/>
<path d="M1249.3 313.5V326" stroke="#c9cdd2" stroke-width="1" fill="none"/><path d="M1250.3 313.5V326" stroke="#fbfcfd" stroke-width="1" fill="none"/>
<path d="M1265.41 324.63A5 5 0 1 1 1264.07 316.16" fill="none" stroke="#c5d2ec" stroke-width="3"/><path d="M1265.16 312.4L1262.24 319.63L1268.52 317.96Z" fill="#c5d2ec"/>
<rect x="787.4" y="409.1" width="86.5" height="190.2" fill="#3a6ea5" stroke="#0a0a0a" stroke-width="1"/>
<rect x="873.9" y="504.2" width="86.5" height="95.1" fill="#3a6ea5" stroke="#0a0a0a" stroke-width="1"/>
<rect x="960.4" y="409.1" width="86.5" height="190.2" fill="#3a6ea5" stroke="#0a0a0a" stroke-width="1"/>
<rect x="1046.9" y="409.1" width="86.5" height="190.2" fill="#3a6ea5" stroke="#0a0a0a" stroke-width="1"/>
<rect x="1133.4" y="504.2" width="86.5" height="95.1" fill="#3a6ea5" stroke="#0a0a0a" stroke-width="1"/>
<path d="M770.1 409.1V599.3M770.1 599.3H761.5M770.1 504.2H761.5M770.1 409.1H761.5M787.4 607H1219.9M787.4 607V615.6M873.9 607V615.6M960.4 607V615.6M1046.9 607V615.6M1133.4 607V615.6M1219.9 607V615.6" fill="none" stroke="#0a0a0a" stroke-width="1"/>
<text transform="translate(1003.65 371.8) scale(1.0115 1)" x="0" y="0" font-family="Liberation Sans, DejaVu Sans, sans-serif" font-weight="bold" font-size="19" fill="#000" text-anchor="middle">Sample Data Distribution</text>
<g font-family="Liberation Sans, DejaVu Sans, sans-serif" font-size="14.5" fill="#000" text-anchor="middle">
<text x="787.4" y="638.7">10</text>
<text x="873.9" y="638.7">15</text>
<text x="960.4" y="638.7">20</text>
<text x="1046.9" y="638.7">25</text>
<text x="1133.4" y="638.7">30</text>
<text x="1219.9" y="638.7">35</text>
<text x="1003.4" y="673.2" font-size="15">data</text>
<text transform="translate(749.9 599.3) rotate(-90)" x="0" y="0">0</text>
<text transform="translate(749.9 504.2) rotate(-90)" x="0" y="0">1</text>
<text transform="translate(749.9 409.1) rotate(-90)" x="0" y="0">2</text>
<text transform="translate(715.3 504.2) rotate(-90)" x="0" y="0" font-size="15">Frequency</text>
</g>
<g fill="none" stroke="#00ff00" stroke-width="3">
<rect x="9.6" y="478.4" width="425" height="211.5"/>
<rect x="701.5" y="332.3" width="574.6" height="363.3"/>
<path d="M441.7 602L672.5 538.9"/>
</g>
<path d="M695 532.9L673.78 543.66L671.26 534.4Z" fill="#00ff00"/>
</svg>
</div>
</body></html>
